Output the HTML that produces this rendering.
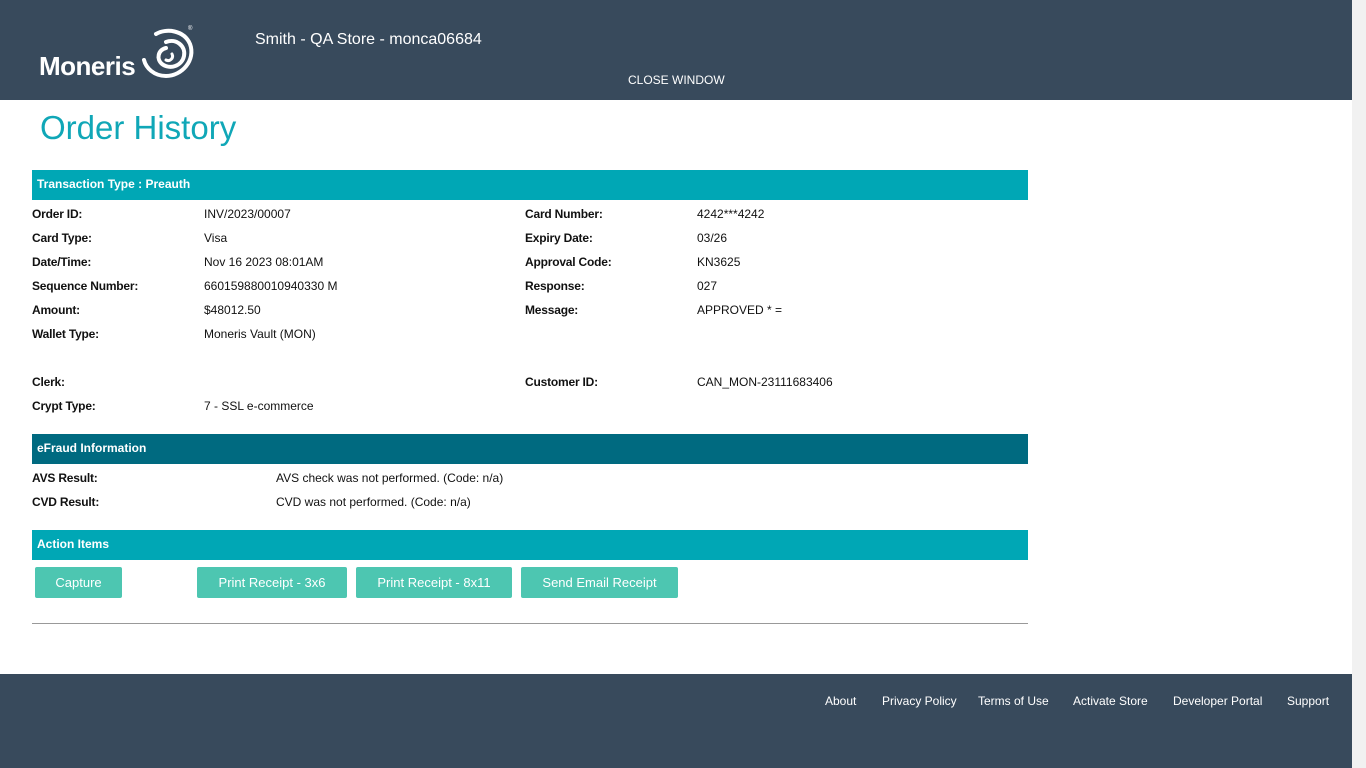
<!DOCTYPE html>
<html><head><meta charset="utf-8"><style>
*{margin:0;padding:0;box-sizing:border-box}
body{width:1366px;height:768px;overflow:hidden;font-family:"Liberation Sans",sans-serif;background:#fff;position:relative;color:#111}
.hdr{position:absolute;left:0;top:0;width:1352px;height:100px;background:#384a5c}
.sb{position:absolute;left:1352px;top:0;width:14px;height:768px;background:#f1f1f1}
.ftr{position:absolute;left:0;top:674px;width:1352px;height:94px;background:#384a5c}
.ftr a{position:absolute;top:20px;color:#fff;font-size:12px;text-decoration:none}
.t{position:absolute;white-space:nowrap}
.bar{position:absolute;left:32px;width:996px;height:30px;color:#fff;font-size:12px;font-weight:bold;padding:7px 0 0 5px}
.l{position:absolute;font-size:12px;font-weight:bold;white-space:nowrap;letter-spacing:-0.2px}
.v{position:absolute;font-size:12px;white-space:nowrap}
.btn{position:absolute;top:567px;height:31px;background:#4dc6b1;color:#fff;font-size:13px;border-radius:2px;text-align:center;line-height:31px}
</style></head><body>
<div class="hdr">
<div class="t" style="left:39px;top:51px;color:#fff;font-size:26px;font-weight:bold;letter-spacing:-0.5px">Moneris</div>
<svg style="position:absolute;left:136px;top:26px" width="60" height="54" viewBox="0 0 60 54" fill="none" stroke="#fff" stroke-linecap="round">
<path d="M20 8 C30 2 48 4 54 18 C60 34 46 50 30 50 C18 50 10 42 8 34" stroke-width="4"/>
<path d="M30 16 C40 12 50 20 48 30 C46 40 34 44 26 38 C20 33 22 24 30 22" stroke-width="4"/>
<path d="M36 28 C38 32 34 36 30 34" stroke-width="3"/>
</svg>
<div class="t" style="left:188px;top:26px;color:#fff;font-size:6px">®</div>
<div class="t" style="left:255px;top:31px;color:#fff;font-size:16px">Smith - QA Store - monca06684</div>
<div class="t" style="left:628px;top:73px;color:#fff;font-size:12px">CLOSE WINDOW</div>
</div>
<div class="t" style="left:40px;top:109px;color:#10a7b7;font-size:33px">Order History</div>

<div class="bar" style="top:170px;background:#00a7b5">Transaction Type : Preauth</div>
<div class="l" style="left:32px;top:207px">Order ID:</div><div class="v" style="left:204px;top:207px">INV/2023/00007</div>
<div class="l" style="left:32px;top:231px">Card Type:</div><div class="v" style="left:204px;top:231px">Visa</div>
<div class="l" style="left:32px;top:255px">Date/Time:</div><div class="v" style="left:204px;top:255px">Nov 16 2023 08:01AM</div>
<div class="l" style="left:32px;top:279px">Sequence Number:</div><div class="v" style="left:204px;top:279px">660159880010940330 M</div>
<div class="l" style="left:32px;top:303px">Amount:</div><div class="v" style="left:204px;top:303px">$48012.50</div>
<div class="l" style="left:32px;top:327px">Wallet Type:</div><div class="v" style="left:204px;top:327px">Moneris Vault (MON)</div>
<div class="l" style="left:32px;top:375px">Clerk:</div>
<div class="l" style="left:32px;top:399px">Crypt Type:</div><div class="v" style="left:204px;top:399px">7 - SSL e-commerce</div>
<div class="l" style="left:525px;top:207px">Card Number:</div><div class="v" style="left:697px;top:207px">4242***4242</div>
<div class="l" style="left:525px;top:231px">Expiry Date:</div><div class="v" style="left:697px;top:231px">03/26</div>
<div class="l" style="left:525px;top:255px">Approval Code:</div><div class="v" style="left:697px;top:255px">KN3625</div>
<div class="l" style="left:525px;top:279px">Response:</div><div class="v" style="left:697px;top:279px">027</div>
<div class="l" style="left:525px;top:303px">Message:</div><div class="v" style="left:697px;top:303px">APPROVED * =</div>
<div class="l" style="left:525px;top:375px">Customer ID:</div><div class="v" style="left:697px;top:375px">CAN_MON-23111683406</div>

<div class="bar" style="top:434px;background:#006a80">eFraud Information</div>
<div class="l" style="left:32px;top:471px">AVS Result:</div><div class="v" style="left:276px;top:471px">AVS check was not performed. (Code: n/a)</div>
<div class="l" style="left:32px;top:495px">CVD Result:</div><div class="v" style="left:276px;top:495px">CVD was not performed. (Code: n/a)</div>

<div class="bar" style="top:530px;background:#00a7b5">Action Items</div>
<div class="btn" style="left:35px;width:87px">Capture</div>
<div class="btn" style="left:197px;width:150px">Print Receipt - 3x6</div>
<div class="btn" style="left:356px;width:156px">Print Receipt - 8x11</div>
<div class="btn" style="left:521px;width:157px">Send Email Receipt</div>
<div style="position:absolute;left:32px;top:623px;width:996px;height:1px;background:#999"></div>

<div class="ftr">
<a style="left:825px">About</a><a style="left:882px">Privacy Policy</a><a style="left:978px">Terms of Use</a><a style="left:1073px">Activate Store</a><a style="left:1173px">Developer Portal</a><a style="left:1287px">Support</a>
</div>
<div class="sb"></div>
</body></html>
